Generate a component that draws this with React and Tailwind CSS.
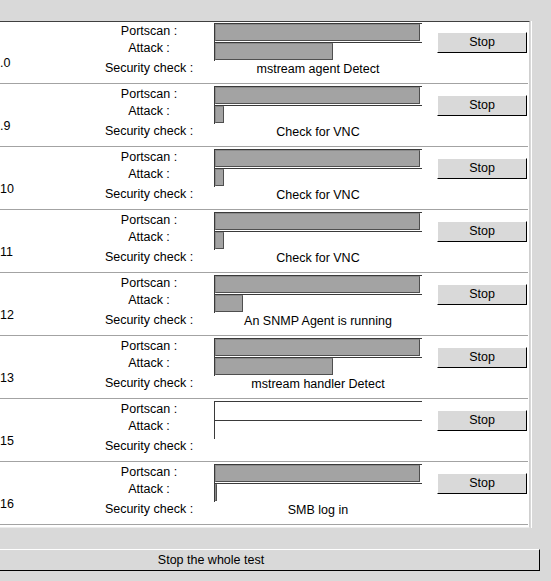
import React from "react";

const rows = [
  { host: ".0", ps: 205, at: 118, res: "mstream agent Detect" },
  { host: ".9", ps: 205, at: 9, res: "Check for VNC" },
  { host: "10", ps: 205, at: 9, res: "Check for VNC" },
  { host: "11", ps: 205, at: 9, res: "Check for VNC" },
  { host: "12", ps: 205, at: 28, res: "An SNMP Agent is running" },
  { host: "13", ps: 205, at: 118, res: "mstream handler Detect" },
  { host: "15", ps: 0, at: 0, res: "" },
  { host: "16", ps: 205, at: 2, res: "SMB log in" },
];

function Bar({ w }) {
  return (
    <div className="h-[19px] w-[208px] border-t border-l border-[#3a3a3a] pb-px">
      {w > 0 && (
        <div
          className="h-full bg-[#a3a3a3] border border-t-[#8a8a8a] border-l-[#8a8a8a] border-b-[#4f4f4f] border-r-[#4f4f4f]"
          style={{ width: w }}
        />
      )}
    </div>
  );
}

function Row({ r, first }) {
  return (
    <div
      className={`flex mr-px border-b border-[#a3a3a3] ${
        first ? "h-[62px] pt-px" : "h-[63px] pt-[2px]"
      }`}
    >
      <div className="w-[144px] pl-[100px] pt-[32px] text-left leading-[16px] whitespace-nowrap">
        {r.host}
      </div>
      <div className="ml-[40px] w-[130px] flex flex-col text-center whitespace-nowrap">
        <div className="h-[17px] leading-[17px]">Portscan :</div>
        <div className="h-[17px] leading-[17px]">Attack :</div>
        <div className="h-[22px] leading-[22px]">Security check :</div>
      </div>
      <div className="w-[208px] flex flex-col">
        <Bar w={r.ps} />
        <Bar w={r.at} />
        <div className="h-[16px] leading-[16px] text-center whitespace-nowrap">
          {r.res}
        </div>
      </div>
      <div className="ml-[15px] w-[90px] pt-[9px]">
        <div className="h-[21px] w-full bg-[#d9d9d9] border border-t-white border-l-white border-b-black border-r-black leading-[19px] text-center">
          Stop
        </div>
      </div>
    </div>
  );
}

export default function App() {
  return (
    <div
      className="w-[551px] h-[581px] overflow-hidden bg-[#d9d9d9] text-black text-[12.5px]"
      style={{ fontFamily: '"Liberation Sans", Arial, sans-serif' }}
    >
      <div className="h-[21px]" />
      <div className="-ml-[100px] w-[632px] border-r border-white">
        <div className="mr-px bg-white border-t border-[#3f3f3f] border-r border-r-[#cfcfcf] border-b border-b-[#ececec] pb-[2px]">
          {rows.map((r, i) => (
            <Row key={i} r={r} first={i === 0} />
          ))}
        </div>
      </div>
      <div className="mt-[21px] -ml-[118px] w-[658px] h-[22px] border border-t-white border-l-white border-b-black border-r-black bg-[#d9d9d9] text-center leading-[20px]">
        Stop the whole test
      </div>
    </div>
  );
}
